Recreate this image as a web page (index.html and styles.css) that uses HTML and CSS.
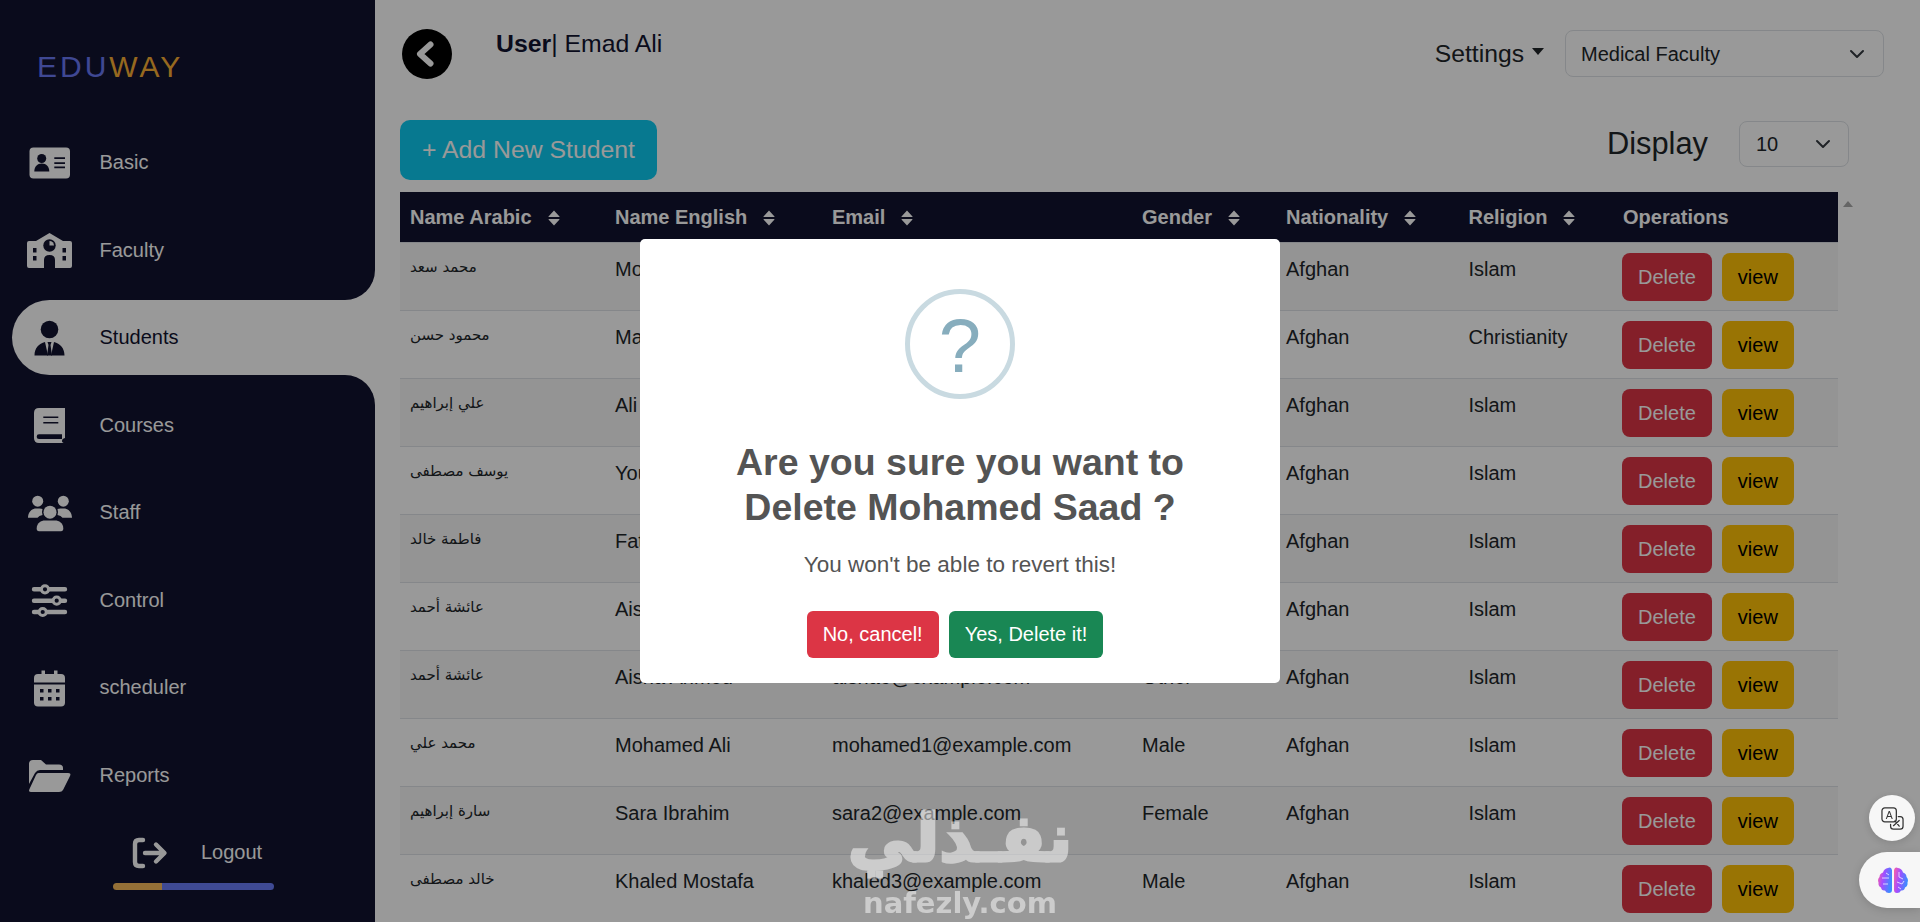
FILE: index.html
```html
<!DOCTYPE html>
<html lang="en">
<head>
<meta charset="utf-8">
<title>EDUWAY Students</title>
<link rel="stylesheet" href="styles.css">
</head>
<body>
<div class="app">
  <aside class="sidebar">
    <div class="side-top">
      <div class="logo"><span class="logo-a">EDU</span><span class="logo-b">WAY</span></div>
      <a class="nav-item">
        <svg class="nav-icon" viewBox="0 0 45 40"><rect x="2.5" y="4.5" width="40.5" height="31" rx="4" class="fg"/><circle cx="14.7" cy="15.5" r="4.5" class="cut"/><path d="M7.3 28.5c0-5 3-8 7.5-8s7.5 3 7.5 8z" class="cut"/><path d="M27.3 14.2H38v1.7H27.3zM27.3 19.2H38v1.7H27.3zM27.3 23.6H38v1.7H27.3z" class="cut"/></svg>
        <span>Basic</span>
      </a>
      <a class="nav-item">
        <svg class="nav-icon" viewBox="0 0 45 40"><path d="M2 11H9L22.5 3 36 11H43Q45 11 45 13V36Q45 38 43 38H28V30Q28 25 22.5 25 17 25 17 30V38H2Q0 38 0 36V13Q0 11 2 11Z" class="fg"/><circle cx="22.5" cy="15.5" r="6.2" class="cut"/><path d="M22.5 11V15.5H27A4.5 4.5 0 0 0 22.5 11Z" class="fg"/><path d="M6 18h3.5v4.5H6zM6 26h3.5v4.5H6zM35.500 18H39v4.5h-3.500zM35.500 26H39v4.500h-3.500z" class="cut"/></svg>
        <span>Faculty</span>
      </a>
    </div>
    <div class="side-active">
      <a class="nav-item nav-item-active">
        <svg class="nav-icon" viewBox="0 0 45 40"><circle cx="22.500" cy="11.500" r="8.800" class="dark"/><path d="M7.500 37.500C7.500 30 12 25.500 18 24L21 37.500ZM37.500 37.500C37.500 30 33 25.500 27 24L24 37.500Z" class="dark"/><path d="M20.500 24h4l-1 3 1.500 10.500h-5L21.500 27Z" class="dark"/></svg>
        <span>Students</span>
      </a>
    </div>
    <div class="side-bottom">
      <a class="nav-item">
        <svg class="nav-icon" viewBox="0 0 45 40"><path d="M12 3H38V33Q35 33.500 35 36 35 38 38 38H12Q7 38 7 33V8Q7 3 12 3Z" class="fg"/><path d="M12 29.300H35V34H12Q9.700 34 9.700 31.700 9.700 29.300 12 29.300Z" class="cut"/><path d="M16.300 11.500H31.300V13H16.300zM16.300 17H31.300V18.500H16.300z" class="cut"/></svg>
        <span>Courses</span>
      </a>
      <a class="nav-item">
        <svg class="nav-icon" viewBox="0 0 45 40"><circle cx="10.700" cy="8.200" r="5.500" class="fg"/><circle cx="36.300" cy="8.200" r="5.500" class="fg"/><circle cx="23" cy="19.200" r="6.500" class="fg"/><path d="M1 24.800C1 19.500 4.500 15.500 9 15.500H12.500Q14.500 15.500 15.500 16 14.500 19 15.500 22 12 22.500 10.500 24.800Z" class="fg"/><path d="M45 24.800C45 19.500 41.500 15.500 37 15.500H33.500Q31.500 15.500 30.500 16 31.500 19 30.500 22 34 22.500 35.500 24.800Z" class="fg"/><path d="M9.700 35.500C9.700 30 14 27.500 18 27.500H28C32 27.500 36.300 30 36.300 35.500Q36.300 38.200 34 38.200H12Q9.700 38.200 9.700 35.500Z" class="fg"/></svg>
        <span>Staff</span>
      </a>
      <a class="nav-item">
        <svg class="nav-icon" viewBox="0 0 45 40"><path d="M7 9.300H38M7 20.700H38M7 32H38" class="line"/><circle cx="18" cy="9.300" r="3.600" class="knob"/><circle cx="29.700" cy="20.700" r="3.600" class="knob"/><circle cx="15.700" cy="32" r="3.600" class="knob"/></svg>
        <span>Control</span>
      </a>
      <a class="nav-item">
        <svg class="nav-icon" viewBox="0 0 45 40"><path d="M14.500 2.500h3.500V6h9V2.500h3.500V6H34Q38 6 38 10V14.500H7V10Q7 6 11 6h3.500Z" class="fg"/><path d="M7 16.500H38V34.500Q38 38.500 34 38.500H11Q7 38.500 7 34.500Z" class="fg"/><path d="M13 21h3.500v3.500H13zM21 21h3.500v3.500H21zM29 21h3.500v3.500H29zM13 29h3.500v3.500H13zM21 29h3.500v3.500H21zM29 29h3.500v3.500H29z" class="cut"/></svg>
        <span>scheduler</span>
      </a>
      <a class="nav-item">
        <svg class="nav-icon" viewBox="0 0 45 40"><path d="M2 9Q2 5 6 5H14L19 9.500H32Q36 9.500 36 13V15H13Q10 15 8 18L2 29Z" class="fg"/><path d="M11.500 18H41Q44.500 18 43 21L36 35Q35 37 32 37H4Q1 37 2.500 34L9 20Q10 18 11.500 18Z" class="fg"/></svg>
        <span>Reports</span>
      </a>
      <a class="logout">
        <svg class="logout-icon" viewBox="0 0 36 32"><path d="M11 3H7Q3 3 3 7V25Q3 29 7 29H11" class="line"/><path d="M13 16H32M24 7.500 32.500 16 24 24.500" class="line"/></svg>
        <span>Logout</span>
      </a>
      <div class="logout-bar"><span class="bar-gold"></span><span class="bar-blue"></span></div>
    </div>
  </aside>

  <main class="main">
    <header class="topbar">
      <a class="back"><svg viewBox="0 0 50 50"><path d="M28.500 15.500 18 25 28.500 34.500" class="back-line"/></svg></a>
      <div class="user"><b>User</b>| Emad Ali</div>
      <div class="top-right">
        <div class="settings">Settings<span class="caret"></span></div>
        <div class="select select-faculty"><span>Medical Faculty</span><svg class="chev" viewBox="0 0 16 16"><path d="M2 5l6 6 6-6"/></svg></div>
      </div>
    </header>
    <div class="toolbar">
      <button class="btn-add">+ Add New Student</button>
      <div class="display">
        <span class="display-label">Display</span>
        <div class="select select-count"><span>10</span><svg class="chev" viewBox="0 0 16 16"><path d="M2 5l6 6 6-6"/></svg></div>
      </div>
    </div>
    <div class="table-wrap">
      <table class="students">
        <colgroup>
          <col class="c1"><col class="c2"><col class="c3"><col class="c4"><col class="c5"><col class="c6"><col class="c7">
        </colgroup>
        <thead>
          <tr>
            <th>Name Arabic<svg class="sort" viewBox="0 0 12 16"><path d="M6 .5 11.500 6.500Q11.800 7 11 7H1Q.2 7 .5 6.500ZM6 15.500 11.500 9.500Q11.800 9 11 9H1Q.2 9 .5 9.500Z"/></svg></th>
            <th>Name English<svg class="sort" viewBox="0 0 12 16"><path d="M6 .5 11.500 6.500Q11.800 7 11 7H1Q.2 7 .5 6.500ZM6 15.500 11.500 9.500Q11.800 9 11 9H1Q.2 9 .5 9.500Z"/></svg></th>
            <th>Email<svg class="sort" viewBox="0 0 12 16"><path d="M6 .5 11.500 6.500Q11.800 7 11 7H1Q.2 7 .5 6.500ZM6 15.500 11.500 9.500Q11.800 9 11 9H1Q.2 9 .5 9.500Z"/></svg></th>
            <th>Gender<svg class="sort" viewBox="0 0 12 16"><path d="M6 .5 11.500 6.500Q11.800 7 11 7H1Q.2 7 .5 6.500ZM6 15.500 11.500 9.500Q11.800 9 11 9H1Q.2 9 .5 9.500Z"/></svg></th>
            <th>Nationality<svg class="sort" viewBox="0 0 12 16"><path d="M6 .5 11.500 6.500Q11.800 7 11 7H1Q.2 7 .5 6.500ZM6 15.500 11.500 9.500Q11.800 9 11 9H1Q.2 9 .5 9.500Z"/></svg></th>
            <th>Religion<svg class="sort" viewBox="0 0 12 16"><path d="M6 .5 11.500 6.500Q11.800 7 11 7H1Q.2 7 .5 6.500ZM6 15.500 11.500 9.500Q11.800 9 11 9H1Q.2 9 .5 9.500Z"/></svg></th>
            <th>Operations</th>
          </tr>
        </thead>
        <tbody>
          <tr><td class="ar">محمد سعد</td><td>Mohamed Saad</td><td>mohamed@example.com</td><td>Male</td><td>Afghan</td><td>Islam</td><td><div class="ops"><button class="btn-del">Delete</button><button class="btn-view">view</button></div></td></tr>
          <tr><td class="ar">محمود حسن</td><td>Mahmoud Hassan</td><td>mahmoud@example.com</td><td>Male</td><td>Afghan</td><td>Christianity</td><td><div class="ops"><button class="btn-del">Delete</button><button class="btn-view">view</button></div></td></tr>
          <tr><td class="ar">علي إبراهيم</td><td>Ali Ibrahim</td><td>ali@example.com</td><td>Male</td><td>Afghan</td><td>Islam</td><td><div class="ops"><button class="btn-del">Delete</button><button class="btn-view">view</button></div></td></tr>
          <tr><td class="ar">يوسف مصطفى</td><td>Youssef Mostafa</td><td>youssef@example.com</td><td>Male</td><td>Afghan</td><td>Islam</td><td><div class="ops"><button class="btn-del">Delete</button><button class="btn-view">view</button></div></td></tr>
          <tr><td class="ar">فاطمة خالد</td><td>Fatma Khaled</td><td>fatma@example.com</td><td>Female</td><td>Afghan</td><td>Islam</td><td><div class="ops"><button class="btn-del">Delete</button><button class="btn-view">view</button></div></td></tr>
          <tr><td class="ar">عائشة أحمد</td><td>Aisha Ahmed</td><td>aisha@example.com</td><td>Female</td><td>Afghan</td><td>Islam</td><td><div class="ops"><button class="btn-del">Delete</button><button class="btn-view">view</button></div></td></tr>
          <tr><td class="ar">عائشة أحمد</td><td>Aisha Ahmed</td><td>aisha6@example.com</td><td>Other</td><td>Afghan</td><td>Islam</td><td><div class="ops"><button class="btn-del">Delete</button><button class="btn-view">view</button></div></td></tr>
          <tr><td class="ar">محمد علي</td><td>Mohamed Ali</td><td>mohamed1@example.com</td><td>Male</td><td>Afghan</td><td>Islam</td><td><div class="ops"><button class="btn-del">Delete</button><button class="btn-view">view</button></div></td></tr>
          <tr><td class="ar">سارة إبراهيم</td><td>Sara Ibrahim</td><td>sara2@example.com</td><td>Female</td><td>Afghan</td><td>Islam</td><td><div class="ops"><button class="btn-del">Delete</button><button class="btn-view">view</button></div></td></tr>
          <tr><td class="ar">خالد مصطفى</td><td>Khaled Mostafa</td><td>khaled3@example.com</td><td>Male</td><td>Afghan</td><td>Islam</td><td><div class="ops"><button class="btn-del">Delete</button><button class="btn-view">view</button></div></td></tr>
        </tbody>
      </table>
      <div class="scroll-gutter"><span class="scroll-up"></span></div>
    </div>
  </main>
</div>

<div class="backdrop">
  <div class="modal">
    <div class="modal-icon">?</div>
    <h2 class="modal-title">Are you sure you want to<br>Delete Mohamed Saad ?</h2>
    <p class="modal-text">You won't be able to revert this!</p>
    <div class="modal-actions">
      <button class="modal-btn modal-cancel">No, cancel!</button>
      <button class="modal-btn modal-confirm">Yes, Delete it!</button>
    </div>
  </div>
</div>

<div class="watermark">
  <div class="wm-ar">نفـذلي</div>
  <div class="wm-en">nafezly.com</div>
</div>

<div class="fab-translate">
  <svg viewBox="0 0 24 24"><rect x="1" y="1" width="15" height="14.500" rx="3" class="tr-box"/><text x="8.500" y="12.500" class="tr-text">A</text><path d="M18 10H20Q23 10 23 13V20Q23 23 20 23H13Q10 23 10 20V18" class="tr-box"/><path d="M13 19.500 19 14M14.500 14.500 19 20" class="tr-box"/></svg>
</div>
<div class="fab-brain">
  <svg viewBox="0 0 30 26">
    <defs><linearGradient id="brainGrad" x1="0" y1="0" x2="1" y2="0.300"><stop offset="0" stop-color="#ff5fa2"/><stop offset=".45" stop-color="#a44dff"/><stop offset="1" stop-color="#3d8bff"/></linearGradient></defs>
    <path d="M14 3V23Q14 26 11 26 8 26 7 23.500 3.500 24 3 20.500 0 19 .5 15.500 -.8 12.500 1.500 10 1.500 6.500 5 5.500 6 1.500 10 1 13 -.5 14 3Z" fill="url(#brainGrad)"/>
    <path d="M16 3V23Q16 26 19 26 22 26 23 23.500 26.500 24 27 20.500 30 19 29.500 15.500 30.800 12.500 28.500 10 28.500 6.500 25 5.500 24 1.500 20 1 17 -.5 16 3Z" fill="url(#brainGrad)"/>
    <path d="M4 11H11M5 17H10M8 6 11 8M21 5V10L25 12M19 15 24 17 26 14M20 20 23 22" class="brain-line"/>
  </svg>
</div>
</body>
</html>
```

FILE: styles.css
```css
* { box-sizing: border-box; }
html, body { margin: 0; height: 100%; overflow: hidden; }
body {
  font-family: "Liberation Sans", Arial, sans-serif;
  font-size: 20px;
  line-height: 1.5;
  color: #212529;
  background: #fff;
}
.app { display: flex; height: 922px; }

/* Sidebar */
.sidebar { width: 375px; flex: none; display: flex; flex-direction: column; background: #fff; }
.side-top {
  height: 300px;
  background: #11132f;
  border-bottom-right-radius: 30px;
  display: flex;
  flex-direction: column;
  gap: 12.5px;
}
.logo {
  height: 112.5px;
  padding: 43px 0 0 37px;
  font-size: 30px;
  line-height: 48px;
  letter-spacing: 3px;
}
.logo-a { color: #6a78f5; }
.logo-b { color: #fbb034; }
.side-active { height: 75px; background: #11132f; padding-left: 12px; }
.side-bottom {
  flex: 1;
  background: #11132f;
  border-top-right-radius: 30px;
  padding-top: 12.5px;
  display: flex;
  flex-direction: column;
  gap: 12.5px;
}
.nav-item {
  height: 75px;
  flex: none;
  display: flex;
  align-items: center;
  gap: 27.5px;
  padding-left: 27px;
  color: #fff;
}
.nav-item span { padding-bottom: 1px; }
.nav-item-active {
  background: #fff;
  color: #11132f;
  border-radius: 37.5px 0 0 37.5px;
  padding-left: 15px;
}
.nav-icon { width: 45px; height: 40px; flex: none; overflow: visible; }
.fg { fill: #fff; }
.cut { fill: #11132f; }
.dark { fill: #11132f; }
.line { fill: none; stroke: #fff; stroke-width: 4.4; stroke-linecap: round; stroke-linejoin: round; }
.knob { fill: #11132f; stroke: #fff; stroke-width: 3; }
.logout {
  display: flex;
  align-items: center;
  gap: 33px;
  margin: 11.5px 0 0 132px;
  height: 32px;
  color: #fff;
}
.logout span { padding-bottom: 2px; }
.logout-icon { width: 36px; height: 32px; flex: none; }
.logout-bar {
  display: flex;
  width: 161px;
  height: 7px;
  margin: 2px 0 0 113px;
  border-radius: 4px;
  overflow: hidden;
}
.bar-gold { width: 49px; background: #f9bb5c; }
.bar-blue { flex: 1; background: #6a7cf7; }

/* Main */
.main { flex: 1; min-width: 0; padding-left: 25px; }
.topbar { height: 120px; padding-top: 29px; display: flex; align-items: flex-start; }
.back { width: 50px; height: 50px; margin-left: 2px; border-radius: 50%; background: #000; flex: none; }
.back svg { display: block; width: 50px; height: 50px; }
.back-line { fill: none; stroke: #fff; stroke-width: 6; stroke-linecap: round; stroke-linejoin: round; }
.user { margin-left: 44px; font-size: 24.8px; line-height: 30px; color: #11132f; }
.top-right { margin-left: auto; margin-top: 1px; padding-right: 36.5px; display: flex; align-items: center; gap: 21px; }
.settings { font-size: 24.7px; line-height: 47px; display: flex; align-items: center; gap: 8px; color: #212529; }
.caret { width: 0; height: 0; border-left: 6.5px solid transparent; border-right: 6.5px solid transparent; border-top: 7px solid #212529; margin-top: -4px; }
.select {
  height: 47px;
  display: flex;
  align-items: center;
  justify-content: space-between;
  background: #fff;
  border: 1px solid #dee2e6;
  border-radius: 8px;
}
.select-faculty { width: 318.5px; padding: 0 18px 0 15px; }
.select-count { width: 110px; padding: 0 17px 0 16px; }
.chev { width: 16px; height: 16px; flex: none; }
.chev path { fill: none; stroke: #343a40; stroke-width: 2; stroke-linecap: round; stroke-linejoin: round; }

.toolbar { height: 60px; margin-bottom: 12px; padding-right: 71px; display: flex; align-items: flex-start; justify-content: space-between; }
.btn-add {
  width: 257px;
  height: 60px;
  border: 0;
  border-radius: 10px;
  background: #0dcaf0;
  color: #fff;
  font-family: inherit;
  font-size: 24.8px;
  padding: 0;
}
.display { display: flex; align-items: center; gap: 31px; margin-top: 1px; }
.display-label { font-size: 30.8px; line-height: 46px; color: #212529; }
.display .select { height: 46px; }

.table-wrap { display: flex; align-items: flex-start; }
.students { width: 1438px; flex: none; table-layout: fixed; border-collapse: separate; border-spacing: 0; }
.c1 { width: 205px; } .c2 { width: 217px; } .c3 { width: 310px; } .c4 { width: 144px; }
.c5 { width: 182.5px; } .c6 { width: 154.5px; } .c7 { width: 225px; }
.students th {
  height: 51px;
  padding: 10px 10px 10px;
  text-align: left;
  font-weight: 700;
  white-space: nowrap;
  color: #fff;
  background: #11132f;
  border-bottom: 1px solid #dee2e6;
  vertical-align: top;
}
.sort { width: 12px; height: 16px; margin-left: 16px; vertical-align: -2px; fill: #fff; }
.students td {
  height: 68px;
  padding: 11px 10px 8px;
  vertical-align: top;
  border-bottom: 1px solid #dee2e6;
  white-space: nowrap;
  color: #212529;
}
.students tbody tr:nth-child(odd) td { background: rgba(0, 0, 0, .03); }
.students td.ar { font-family: "DejaVu Sans", "Liberation Sans", sans-serif; font-size: 15px; line-height: 28px; padding-top: 10px; color: #212529; }
.ops { display: flex; gap: 10px; margin: -1px 0 0 -1px; }
.btn-del, .btn-view {
  height: 48px;
  padding: 0 16px;
  border: 0;
  border-radius: 8px;
  font-family: inherit;
  font-size: 20px;
}
.btn-del { background: #dc3545; color: #fff; }
.btn-view { background: #ffc107; color: #000; }
.scroll-gutter { width: 18px; flex: none; display: flex; justify-content: center; padding: 9px 0 0 1px; }
.scroll-up { width: 0; height: 0; border-left: 5px solid transparent; border-right: 5px solid transparent; border-bottom: 6px solid #a8a8a8; }

/* Modal */
.backdrop {
  position: fixed;
  inset: 0;
  background: rgba(0, 0, 0, .4);
  display: flex;
  align-items: center;
  justify-content: center;
}
.modal {
  width: 640px;
  height: 444px;
  padding: 50px 0 0;
  background: #fff;
  border-radius: 5px;
  display: flex;
  flex-direction: column;
  align-items: center;
  color: #545454;
}
.modal-icon {
  width: 110px;
  height: 110px;
  border: 5px solid #c9dae1;
  border-radius: 50%;
  color: #87adbd;
  font-size: 76px;
  line-height: 104px;
  text-align: center;
  flex: none;
}
.modal-title { margin: 41px 0 0; font-size: 37.5px; line-height: 45px; font-weight: 700; text-align: center; }
.modal-text { margin: 17.5px 0 0; font-size: 22.5px; line-height: 34px; text-align: center; }
.modal-actions { display: flex; gap: 10px; margin: 29px 10px 0 0; }
.modal-btn { height: 47px; padding: 0 16px; border: 0; border-radius: 6px; color: #fff; font-family: inherit; font-size: 20px; }
.modal-cancel { background: #dc3545; }
.modal-confirm { background: #198754; }

/* Watermark and floating buttons */
.watermark {
  position: fixed;
  left: 840px;
  top: 794px;
  width: 240px;
  height: 128px;
  overflow: hidden;
  color: #fff;
  opacity: .5;
  text-align: center;
}
.wm-ar { font-family: "DejaVu Sans", sans-serif; font-weight: 700; font-size: 66px; line-height: 90px; -webkit-text-stroke: 3px #fff; }
.wm-en { font-family: "DejaVu Sans", sans-serif; font-weight: 700; font-size: 29px; line-height: 34px; margin-top: 2px; }
.fab-translate {
  position: fixed;
  left: 1869px;
  top: 795px;
  width: 46px;
  height: 46px;
  border-radius: 50%;
  background: #f7f7f7;
  box-shadow: 0 2px 10px rgba(0, 0, 0, .15);
  display: flex;
  align-items: center;
  justify-content: center;
}
.fab-translate svg { width: 23px; height: 23px; }
.tr-box { fill: none; stroke: #333; stroke-width: 1.3; stroke-linecap: round; }
.tr-text { font-family: "Liberation Sans", sans-serif; font-size: 11px; fill: #333; text-anchor: middle; }
.fab-brain {
  position: fixed;
  left: 1859px;
  top: 852px;
  width: 61px;
  height: 56px;
  border-radius: 28px 0 0 28px;
  background: #f7f7f7;
  box-shadow: 0 2px 10px rgba(0, 0, 0, .15);
  padding: 15px 0 0 19px;
}
.fab-brain svg { display: block; width: 30px; height: 26px; overflow: visible; }
.brain-line { fill: none; stroke: #fff; stroke-width: .9; opacity: .8; }
```
